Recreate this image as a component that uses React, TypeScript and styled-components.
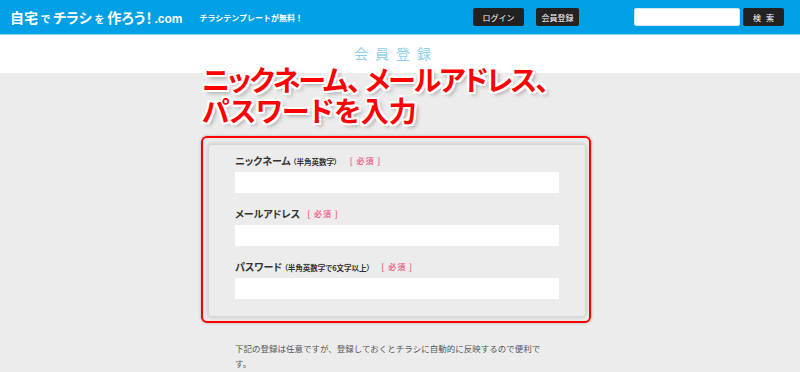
import React from "react"
import styled, { createGlobalStyle } from "styled-components"

const GlobalStyle = createGlobalStyle`
  html, body {
    margin: 0;
    padding: 0;
    background: #ececec;
    font-family: "Noto Sans CJK JP", "Noto Sans", sans-serif;
    width: 800px;
    height: 372px;
    overflow: hidden;
  }
`

const fields = [
  { label: "ニックネーム", note: "（半角英数字）", gap: 12 },
  { label: "メールアドレス", note: "", gap: 7 },
  { label: "パスワード", note: "（半角英数字で6文字以上）", gap: 11 },
]

export default function App() {
  return (
    <>
      <GlobalStyle />
      <S.Header>
        <S.Logo>
          自宅<S.Small>で</S.Small>チラシ<S.Small>を</S.Small>作ろう！<S.Dom>.com</S.Dom>
        </S.Logo>
        <S.Tagline>チラシテンプレートが無料！</S.Tagline>
        <S.NavButtons>
          <S.DarkButton $w={51}>ログイン</S.DarkButton>
          <S.DarkButton $w={43}>会員登録</S.DarkButton>
        </S.NavButtons>
        <S.Search>
          <S.SearchInput />
          <S.DarkButton $w={41} $spaced>検索</S.DarkButton>
        </S.Search>
      </S.Header>
      <S.TitleBand>
        <S.Title>会員登録</S.Title>
      </S.TitleBand>
      <S.Main>
        <S.Callout>
          <S.CalloutLine $tight>
            ニックネーム<S.Comma>、</S.Comma>メールアドレス<S.Comma>、</S.Comma>
          </S.CalloutLine>
          <S.CalloutLine>パスワードを入力</S.CalloutLine>
        </S.Callout>
        <S.Highlight>
          <S.Panel>
            {fields.map((f) => (
              <S.Field key={f.label}>
                <S.LabelRow $gap={f.gap}>
                  <S.Label>
                    {f.label}
                    {f.note && <S.Note>{f.note}</S.Note>}
                  </S.Label>
                  <S.Required>[ 必須 ]</S.Required>
                </S.LabelRow>
                <S.Input />
              </S.Field>
            ))}
          </S.Panel>
        </S.Highlight>
        <S.Notice>
          下記の登録は任意ですが、登録しておくとチラシに自動的に反映するので便利です。
        </S.Notice>
      </S.Main>
    </>
  )
}

const S = {
  Header: styled.header`
    height: 34px;
    background: #00a0e6;
    border-bottom: 1px solid #8fd4f2;
    display: flex;
    align-items: center;
    padding: 0 16px 0 10px;
    color: #fff;
  `,
  Logo: styled.div`
    font-size: 14px;
    font-weight: 700;
    font-feature-settings: "palt";
    white-space: nowrap;
    display: flex;
    align-items: baseline;
  `,
  Small: styled.span`
    font-size: 10px;
    margin: 0 3px;
  `,
  Dom: styled.span`
    font-family: "Liberation Sans", sans-serif;
    font-size: 12px;
    font-weight: 700;
    margin-left: 2px;
  `,
  Tagline: styled.div`
    font-size: 8px;
    font-weight: 700;
    margin-left: 17px;
    white-space: nowrap;
  `,
  NavButtons: styled.div`
    display: flex;
    gap: 12px;
    margin-left: auto;
  `,
  DarkButton: styled.div<{ $w: number; $spaced?: boolean }>`
    width: ${(p) => p.$w}px;
    height: 18px;
    background: #222;
    border-radius: 2px;
    color: #fff;
    font-size: 8px;
    letter-spacing: ${(p) => (p.$spaced ? "5px" : "0")};
    text-indent: ${(p) => (p.$spaced ? "5px" : "0")};
    display: flex;
    align-items: center;
    justify-content: center;
    white-space: nowrap;
  `,
  Search: styled.div`
    display: flex;
    gap: 3px;
    margin-left: 55px;
  `,
  SearchInput: styled.div`
    width: 104px;
    height: 16px;
    background: #fff;
    border: 1px solid #cfe6f2;
    border-radius: 2px;
  `,
  TitleBand: styled.div`
    height: 38px;
    background: #fff;
    display: flex;
    justify-content: center;
    padding-right: 8px;
  `,
  Title: styled.h1`
    margin: 10px 0 0;
    font-size: 14px;
    font-weight: 400;
    letter-spacing: 7px;
    color: #8fcfec;
    line-height: 16px;
  `,
  Main: styled.main`
    position: relative;
    display: flex;
    flex-direction: column;
    align-items: center;
    padding: 63px 8px 0 0;
  `,
  Callout: styled.div`
    position: absolute;
    left: 202px;
    top: -9px;
    display: flex;
    flex-direction: column;
    font-size: 28px;
    font-weight: 700;
    line-height: 31px;
    color: #ff0000;
    font-feature-settings: "palt";
    white-space: nowrap;
    text-shadow: 2px 0 0 #fff, -2px 0 0 #fff, 0 2px 0 #fff, 0 -2px 0 #fff,
      2px 2px 0 #fff, -2px -2px 0 #fff, 2px -2px 0 #fff, -2px 2px 0 #fff,
      3px 3px 4px rgba(0, 0, 0, 0.35);
  `,
  CalloutLine: styled.span<{ $tight?: boolean }>`
    letter-spacing: ${(p) => (p.$tight ? "-1.8px" : "0")};
  `,
  Comma: styled.span`
    margin-right: 6px;
  `,
  Highlight: styled.div`
    width: 376px;
    border: 2px solid #ff0000;
    border-radius: 6px;
    padding: 7px 4px 5px 6px;
    box-shadow: 0 0 3px rgba(0, 0, 0, 0.25);
  `,
  Panel: styled.div`
    background: #ececec;
    box-shadow: 0 0 4px 2px rgba(0, 0, 0, 0.12);
    border-radius: 3px;
    padding: 9px 26px 17px;
    display: flex;
    flex-direction: column;
    gap: 14px;
  `,
  Field: styled.div`
    display: flex;
    flex-direction: column;
    gap: 6px;
  `,
  LabelRow: styled.div<{ $gap: number }>`
    display: flex;
    align-items: center;
    gap: ${(p) => p.$gap}px;
    height: 12px;
  `,
  Label: styled.span`
    font-size: 10px;
    font-weight: 700;
    color: #333;
    font-feature-settings: "palt";
  `,
  Note: styled.span`
    font-size: 7.5px;
    margin-left: 2px;
  `,
  Required: styled.span`
    font-size: 8px;
    font-weight: 700;
    color: #f4668c;
    letter-spacing: 1px;
    white-space: pre;
  `,
  Input: styled.div`
    height: 21px;
    background: #fff;
  `,
  Notice: styled.p`
    width: 310px;
    margin: 18px 12px 0 0;
    font-size: 8.5px;
    line-height: 15px;
    color: #555;
  `,
}
